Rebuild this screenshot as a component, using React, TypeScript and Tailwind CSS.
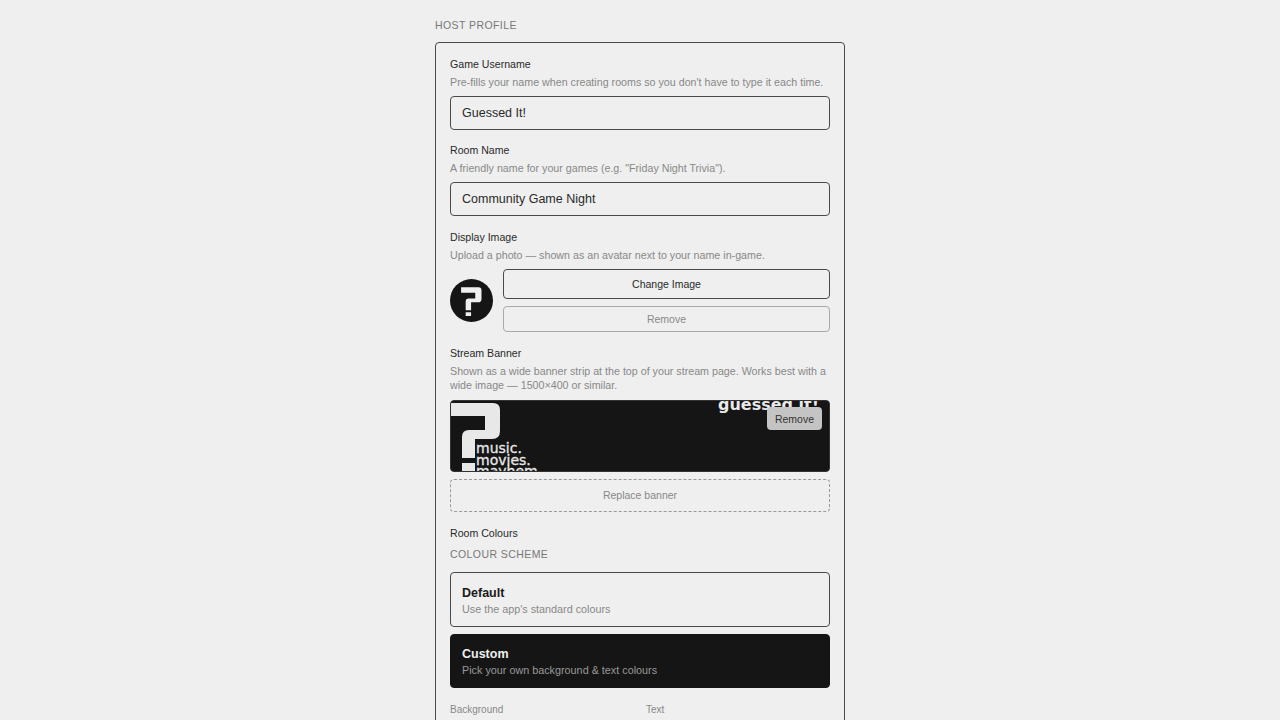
function Label({ children }: { children: React.ReactNode }) {
  return <div className="text-[10.6px] leading-[14px] text-[#2a2a2a]">{children}</div>
}

function Hint({ children }: { children: React.ReactNode }) {
  return <div className="mt-1 text-[10.7px] leading-[14px] text-[#888]">{children}</div>
}

function Field({ label, hint, value }: { label: string; hint: string; value: string }) {
  return (
    <div>
      <Label>{label}</Label>
      <Hint>{hint}</Hint>
      <div className="mt-[7px] flex h-[33.5px] items-center rounded border border-[#4a4a4a] px-[11px] pt-px text-[12.5px] text-[#2a2a2a]">
        {value}
      </div>
    </div>
  )
}

function LogoMark({ className }: { className: string }) {
  return (
    <svg viewBox="0 0 50 72" className={className} fill="currentColor">
      <path d="M0 3H42Q49 3 49 10V31Q49 39 41 39H24V58H11V37Q11 30 18 30H34V16H0Z" />
      <rect x="11" y="63" width="13" height="9" />
    </svg>
  )
}

export default function App() {
  return (
    <div className="flex min-h-[720px] justify-center overflow-hidden bg-[#efefef] font-['Liberation_Sans',sans-serif]">
      <div className="h-[720px] w-[410px] overflow-hidden pt-[18px]">
        <div className="text-[10.5px] leading-[14px] tracking-[0.04em] text-[#777]">HOST PROFILE</div>
        <div className="mt-[10px] rounded border border-[#4a4a4a] px-[14px] pb-5 pt-[14px]">
          <Field
            label="Game Username"
            hint="Pre-fills your name when creating rooms so you don't have to type it each time."
            value="Guessed It!"
          />
          <div className="mt-[13.5px]">
            <Field
              label="Room Name"
              hint={'A friendly name for your games (e.g. "Friday Night Trivia").'}
              value="Community Game Night"
            />
          </div>

          <div className="mt-[14.5px]">
            <Label>Display Image</Label>
            <Hint>Upload a photo — shown as an avatar next to your name in-game.</Hint>
            <div className="mt-[7px] flex items-center gap-[10px]">
              <div className="flex h-[43px] w-[43px] shrink-0 items-center justify-center rounded-full bg-[#151515] text-[#efefef]">
                <LogoMark className="h-[30px] w-[21px]" />
              </div>
              <div className="flex flex-1 flex-col gap-[7px]">
                <div className="flex h-[30px] items-center justify-center rounded border border-[#4a4a4a] pt-px text-[10.5px] text-[#2a2a2a]">
                  Change Image
                </div>
                <div className="flex h-[26px] items-center justify-center rounded border border-[#aaa] pt-px text-[10.5px] text-[#888]">
                  Remove
                </div>
              </div>
            </div>
          </div>

          <div className="mt-[14px]">
            <Label>Stream Banner</Label>
            <Hint>
              Shown as a wide banner strip at the top of your stream page. Works best with a wide image — 1500×400 or similar.
            </Hint>
            <div className="relative mt-[8px] h-[71.5px] overflow-hidden rounded border border-[#333] bg-[#151515] text-[#e8e8e8]">
              <LogoMark className="absolute left-0 top-[-1px] h-[72px] w-[50px]" />
              <div className="absolute left-[25px] top-[42px] font-['DejaVu_Sans',sans-serif] text-[14px] leading-[11.5px] [-webkit-text-stroke:0.3px_#e8e8e8]">
                <div>music.</div>
                <div>movies.</div>
                <div>mayhem</div>
              </div>
              <div className="absolute right-[10px] top-[-6px] font-['DejaVu_Sans',sans-serif] text-[16px] font-bold leading-[20px]">
                guessed it!
              </div>
              <div className="absolute right-[7px] top-[6px] flex h-[23px] w-[55px] items-center justify-center rounded bg-[#c4c4c4] pt-[2px] text-[10.5px] text-[#333]">
                Remove
              </div>
            </div>
            <div className="mt-[7px] flex h-[33.5px] items-center justify-center rounded border border-dashed border-[#999] pt-px text-[10.5px] text-[#888]">
              Replace banner
            </div>
          </div>

          <div className="mt-[13.5px]">
            <Label>Room Colours</Label>
            <div className="mt-[7.5px] text-[10.5px] leading-[14px] tracking-[0.04em] text-[#777]">COLOUR SCHEME</div>
            <div className="mt-[10.5px] flex h-[55px] flex-col justify-center rounded border border-[#4a4a4a] px-[11px] pt-[3px]">
              <div className="text-[12.5px] font-bold leading-[16px] text-[#1a1a1a]">Default</div>
              <div className="mt-px text-[10.8px] leading-[15px] text-[#888]">Use the app's standard colours</div>
            </div>
            <div className="mt-[7px] flex h-[54.5px] flex-col justify-center rounded border border-[#151515] bg-[#151515] px-[11px] pt-[3px]">
              <div className="text-[12.5px] font-bold leading-[16px] text-[#efefef]">Custom</div>
              <div className="mt-px text-[10.8px] leading-[15px] text-[#999]">Pick your own background & text colours</div>
            </div>
            <div className="mt-[14.5px] grid grid-cols-2 gap-3 text-[10px] leading-[14px] text-[#888]">
              <div>Background</div>
              <div>Text</div>
            </div>
          </div>
        </div>
      </div>
    </div>
  )
}
